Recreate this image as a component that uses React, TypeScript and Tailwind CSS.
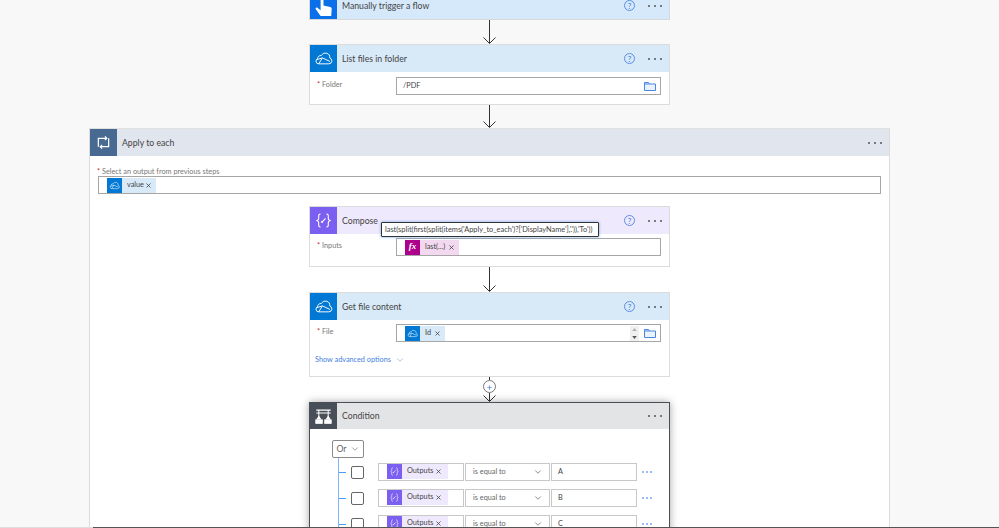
import { ChevronDown, X } from 'lucide-react';
import type { ReactNode } from 'react';

const CloudIcon = ({ className }: { className: string }) => (
  <svg viewBox="0 0 32 32" className={className} fill="none" stroke="currentColor" strokeWidth="1.6">
    <path d="M8 25h17a5 5 0 0 0 1.500-9.800A7.500 7.500 0 0 0 12.300 11 5.500 5.500 0 0 0 6 16.400 4.500 4.500 0 0 0 8 25z" />
    <path d="M4.500 18l9.500-3 13 6M14 15l-6 10" />
  </svg>
);

const ComposeIcon = ({ className }: { className: string }) => (
  <svg viewBox="0 0 32 32" className={className} fill="none" stroke="currentColor" strokeWidth="1.800">
    <path d="M11 5c-4 0-3 4-3 7s-1 3-3 4c2 1 3 1 3 4s-1 7 3 7M21 5c4 0 3 4 3 7s1 3 3 4c-2 1-3 1-3 4s1 7-3 7" />
    <path d="M12.500 19.500l7-7M12.500 19.500l.5-2.500M12.500 19.500l2.500-.5" />
  </svg>
);

const TouchIcon = () => (
  <svg viewBox="0 0 28 28" className="h-[27px] w-[27px] shrink-0 text-white" fill="currentColor">
    <path d="M11 7.500a1.500 1.500 0 0 1 3 0V14l7 1.500c1 .3 1.500 1 1.500 2L22 25H11l-5-7c-.8-1.200.8-2.600 2-1.500l3 2.500z" />
    <path d="M8 7.500a4.500 4.500 0 1 1 9 0" fill="none" stroke="currentColor" />
  </svg>
);

const RepeatIcon = () => (
  <svg viewBox="0 0 16 16" className="h-[15px] w-[15px] text-white" fill="none" stroke="currentColor" strokeWidth="1.300">
    <path d="M2.500 12.500V3.500h9M9.500 1.500l2 2-2 2M13.500 3.500v9h-9M6.500 10.500l-2 2 2 2" />
  </svg>
);

const ConditionIcon = () => (
  <svg viewBox="0 0 20 20" className="h-[17px] w-[17px] text-white" fill="none" stroke="currentColor" strokeWidth="1.200">
    <path d="M1.500 2.500h17M4.500 2.500v8M15.500 2.500v8M1.500 6h17" />
    <path d="M4.500 10l-2 3h4zM15.500 10l-2 3h4z" fill="currentColor" />
    <rect x="1" y="14" width="7.500" height="4" fill="currentColor" />
    <rect x="11.500" y="14" width="7.500" height="4" fill="currentColor" />
  </svg>
);

const FolderIcon = () => (
  <svg viewBox="0 0 12 10" className="h-[10px] w-[12px] text-[#4a86e0]" fill="#eaf2fd" stroke="currentColor">
    <path d="M.5 9.500v-8h4l1 1.500h6v6.500zM.5 3h5" />
  </svg>
);

const HelpIcon = () => (
  <span className="flex h-[11px] w-[11px] items-center justify-center rounded-full border border-[#5a8fe8] text-[8px] text-[#3f7fe0]">
    ?
  </span>
);

const Dots = ({ color = 'bg-[#555555]', gap = 'gap-[4px]' }: { color?: string; gap?: string }) => (
  <div className={`flex ${gap}`}>
    <span className={`h-[2px] w-[2px] rounded-full ${color}`} />
    <span className={`h-[2px] w-[2px] rounded-full ${color}`} />
    <span className={`h-[2px] w-[2px] rounded-full ${color}`} />
  </div>
);

const Arrow = ({ height }: { height: string }) => (
  <div className={`flex ${height} flex-col items-center justify-end`}>
    <div className="w-px flex-1 bg-[#333333]" />
    <svg viewBox="0 0 13 7" className="-mt-[6px] h-[7px] w-[13px] text-[#333333]" fill="none" stroke="currentColor">
      <path d="M.5.500l6 6 6-6" />
    </svg>
  </div>
);

const Header = ({
  icon,
  iconBg,
  headerBg,
  title,
  help = true,
  height = 'h-[27px]',
}: {
  icon: ReactNode;
  iconBg: string;
  headerBg: string;
  title: string;
  help?: boolean;
  height?: string;
}) => (
  <div className={`flex ${height} items-center ${headerBg}`}>
    <div className={`flex h-full w-[27px] shrink-0 items-center justify-center overflow-hidden ${iconBg}`}>{icon}</div>
    <span className="ml-[5px] flex-1 text-[8.700px] text-[#444444]">{title}</span>
    {help && <HelpIcon />}
    <div className="mr-[7px] ml-[13px]">
      <Dots />
    </div>
  </div>
);

const Field = ({ label, className, children }: { label: string; className: string; children: ReactNode }) => (
  <div className={`flex ${className}`}>
    <div className="w-[86px] pt-[3px] pl-[7px] text-[7.300px] text-[#777777]">
      <span className="text-[#c4262e]">*</span> {label}
    </div>
    <div className="flex h-[18px] w-[265px] items-center border border-[#a6a6a6] bg-white">{children}</div>
  </div>
);

const Token = ({
  icon,
  iconBg,
  bg,
  label,
  labelWidth,
}: {
  icon: ReactNode;
  iconBg: string;
  bg: string;
  label: string;
  labelWidth: string;
}) => (
  <div className={`ml-[8px] flex h-[15px] items-center ${bg}`}>
    <div className={`flex h-[15px] w-[15px] items-center justify-center ${iconBg}`}>{icon}</div>
    <span className={`pt-px pl-[5px] text-[7.300px] text-[#444444] ${labelWidth}`}>{label}</span>
    <X className="mr-[4px] h-[7px] w-[7px] shrink-0 text-[#333333]" strokeWidth={2.500} />
  </div>
);

const ConditionRow = ({ value }: { value: string }) => (
  <div className="flex h-[26px] items-start">
    <div className="mt-[9px] h-px w-[7px] bg-[#4a9bf5]" />
    <div className="mt-[3px] ml-[5px] h-[13px] w-[13px] rounded-[2px] border border-[#666666] bg-white" />
    <div className="ml-[14px] flex h-[18px] w-[86px] items-start border border-[#c8c8c8] bg-white">
      <div className="ml-[8px] flex h-[15px] items-center bg-[#efe9fd]">
        <div className="flex h-[15px] w-[15px] items-center justify-center bg-[#7b5ff0]">
          <ComposeIcon className="h-[11px] w-[11px] text-white" />
        </div>
        <span className="w-[33px] pl-[5px] text-[7.300px] text-[#444444]">Outputs</span>
        <X className="mr-[6px] h-[7px] w-[7px] shrink-0 text-[#333333]" strokeWidth={2.500} />
      </div>
    </div>
    <div className="ml-[1px] flex h-[18px] w-[85px] items-center justify-between border border-[#c8c8c8] bg-white pr-[6px] pl-[7px] text-[7.300px] text-[#666666]">
      is equal to
      <ChevronDown className="h-[10px] w-[10px] text-[#777777]" />
    </div>
    <div className="ml-[1px] flex h-[18px] w-[86px] items-center border border-[#c8c8c8] bg-white pl-[6px] text-[7.300px] text-[#444444]">
      {value}
    </div>
    <div className="mt-[8px] ml-[5px]">
      <Dots color="bg-[#7aa6ee]" gap="gap-[2px]" />
    </div>
  </div>
);

export default function App() {
  return (
    <div className="relative h-[528px] w-[999px] overflow-hidden bg-[#f8f8f8] font-['Lato','Noto_Sans',sans-serif]">
      <div className="flex w-[979px] flex-col items-center">
        {/* top of the trigger card is scrolled off the page */}
        <div className="-mt-[8px] w-[361px] border-x border-b border-[#d8d8d8]">
          <Header icon={<TouchIcon />} iconBg="bg-[#0a6fe8]" headerBg="bg-[#d6e9fb]" title="Manually trigger a flow" />
        </div>

        <Arrow height="h-[24px]" />

        <div className="h-[61px] w-[361px] border border-[#dcdcdc] bg-white">
          <Header
            icon={<CloudIcon className="h-[19px] w-[19px] text-white" />}
            iconBg="bg-[#0078d4]"
            headerBg="bg-[#d8e9f8]"
            title="List files in folder"
          />
          <Field label="Folder" className="mt-[5px]">
            <span className="flex-1 pl-[6px] text-[7.300px] text-[#444444]">/PDF</span>
            <div className="mr-[4px]">
              <FolderIcon />
            </div>
          </Field>
        </div>

        <Arrow height="h-[23px]" />

        <div className="ml-[89px] h-[400px] w-[801px] self-start border-x border-t border-x-[#dcdcdc] border-t-[#e0e0e0] bg-white">
          <Header
            icon={<RepeatIcon />}
            iconBg="bg-[#486991]"
            headerBg="bg-[#e1e5ee]"
            title="Apply to each"
            help={false}
          />

          <div className="mt-[11px] pl-[7px] text-[7.300px] leading-[9px] text-[#777777]">
            <span className="text-[#c4262e]">*</span> Select an output from previous steps
          </div>
          <div className="mx-[8px] flex h-[18px] items-center border border-[#a6a6a6]">
            <Token
              icon={<CloudIcon className="h-[11px] w-[11px] text-white" />}
              iconBg="bg-[#0078d4]"
              bg="bg-[#d8e9f8]"
              label="value"
              labelWidth="w-[23px]"
            />
          </div>

          <div className="mt-[12px] flex flex-col items-center">
            <div className="relative h-[61px] w-[361px] border border-[#dcdcdc] bg-white">
              <Header
                icon={<ComposeIcon className="h-[19px] w-[19px] text-white" />}
                iconBg="bg-[#7b5ff0]"
                headerBg="bg-[#efe9fd]"
                title="Compose"
              />
              <Field label="Inputs" className="mt-[4px]">
                <Token
                  icon={<span className="font-['Liberation_Serif',serif] text-[9px] font-bold text-white italic">fx</span>}
                  iconBg="bg-[#ad008c]"
                  bg="bg-[#f3d9ef]"
                  label="last(...)"
                  labelWidth="w-[28px]"
                />
              </Field>
              {/* expression tooltip */}
              <div className="absolute top-[15px] left-[71px] flex h-[15px] w-[218px] items-center rounded-[1px] border border-[#333333] bg-white pl-[3px] text-[7.400px] whitespace-nowrap text-[#444444] shadow-[0_0_3px_#6aa7e8]">
                {"last(split(first(split(items('Apply_to_each')?['DisplayName'],'.')),'To'))"}
              </div>
            </div>

            <Arrow height="h-[25px]" />

            <div className="h-[85px] w-[361px] border border-[#dcdcdc] bg-white">
              <Header
                icon={<CloudIcon className="h-[19px] w-[19px] text-white" />}
                iconBg="bg-[#0078d4]"
                headerBg="bg-[#d8e9f8]"
                title="Get file content"
              />
              <Field label="File" className="mt-[4px]">
                <Token
                  icon={<CloudIcon className="h-[11px] w-[11px] text-white" />}
                  iconBg="bg-[#0078d4]"
                  bg="bg-[#d8e9f8]"
                  label="Id"
                  labelWidth="w-[14px]"
                />
                <div className="ml-auto flex h-[15px] w-[9px] flex-col items-center justify-between bg-[#f0f0f0] text-[#555555]">
                  <svg viewBox="0 0 6 4" className="mt-[2px] h-[3px] w-[5px]" fill="#b0b0b0">
                    <path d="M3 0l3 4H0z" />
                  </svg>
                  <svg viewBox="0 0 6 4" className="mb-[2px] h-[3px] w-[5px]" fill="currentColor">
                    <path d="M3 4L0 0h6z" />
                  </svg>
                </div>
                <div className="mr-[4px] ml-[5px]">
                  <FolderIcon />
                </div>
              </Field>
              <div className="mt-[13px] flex items-center pl-[5px] text-[7.300px] text-[#3f7fe0]">
                Show advanced options
                <ChevronDown className="ml-[4px] h-[10px] w-[10px] text-[#7a9fe0]" strokeWidth={1.500} />
              </div>
            </div>

            <div className="flex h-[25px] flex-col items-center">
              <div className="h-[3px] w-px bg-[#333333]" />
              <div className="flex h-[13px] w-[13px] items-center justify-center rounded-full border border-[#777777] bg-white text-[10px] leading-none text-[#3f7fe0]">
                +
              </div>
              <Arrow height="h-[9px]" />
            </div>

            <div className="h-[200px] w-[361px] border border-[#4a4f55] bg-white shadow-[0_0_8px_rgba(0,0,0,0.35)]">
              <Header
                icon={<ConditionIcon />}
                iconBg="bg-[#484f58]"
                headerBg="bg-[#e3e4e6]"
                title="Condition"
                help={false}
                height="h-[26px]"
              />
              <div className="mt-[11px] ml-[22px] flex h-[18px] w-[32px] items-center justify-center gap-[3px] rounded-[2px] border border-[#8a8a8a] text-[8.700px] text-[#666666]">
                Or
                <ChevronDown className="h-[10px] w-[10px] shrink-0" strokeWidth={1.500} />
              </div>
              <div className="ml-[28px] border-l border-[#7db5f7] pt-[5px]">
                <ConditionRow value="A" />
                <ConditionRow value="B" />
                <ConditionRow value="C" />
              </div>
            </div>
          </div>
        </div>
      </div>

      {/* window edge along the bottom of the capture */}
      <div className="absolute right-0 bottom-0 left-0 flex h-px">
        <div className="w-[93px] bg-[#dedede]" />
        <div className="flex-1 bg-[#555555]" />
      </div>
    </div>
  );
}
